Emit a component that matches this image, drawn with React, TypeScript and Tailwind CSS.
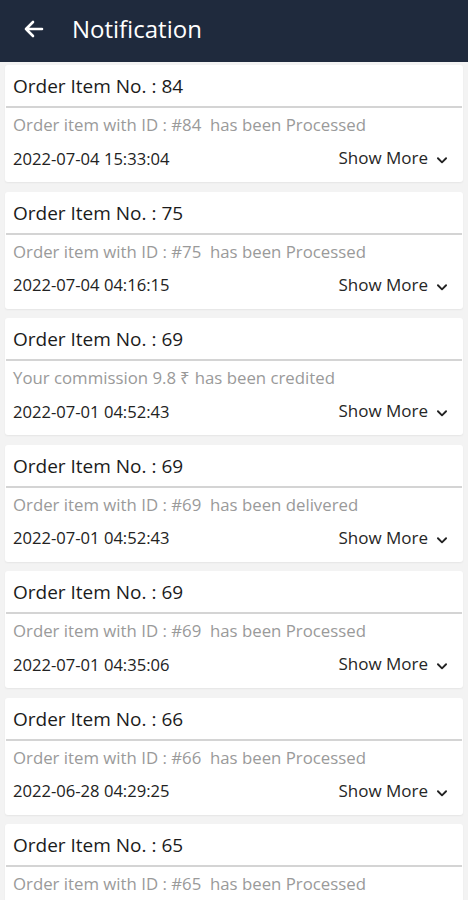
import { FC } from "react";

type Note = { no: string; msg: string; date: string };

const notes: Note[] = [
	{ no: "84", msg: "Order item with ID : #84  has been Processed", date: "2022-07-04 15:33:04" },
	{ no: "75", msg: "Order item with ID : #75  has been Processed", date: "2022-07-04 04:16:15" },
	{ no: "69", msg: "Your commission 9.8 ₹ has been credited", date: "2022-07-01 04:52:43" },
	{ no: "69", msg: "Order item with ID : #69  has been delivered", date: "2022-07-01 04:52:43" },
	{ no: "69", msg: "Order item with ID : #69  has been Processed", date: "2022-07-01 04:35:06" },
	{ no: "66", msg: "Order item with ID : #66  has been Processed", date: "2022-06-28 04:29:25" },
	{ no: "65", msg: "Order item with ID : #65  has been Processed", date: "2022-06-28 04:20:11" },
];

const NoteCard: FC<Note> = ({ no, msg, date }) => (
	<div className="bg-white rounded-[3px] shadow-[0_1px_2px_rgba(0,0,0,0.06)] pt-[8px] pb-[13px]">
		<h2 className="px-[8px] h-[26px] leading-[26px] text-[19px] text-[#1b1b1b]">
			Order Item No. : {no}
		</h2>
		<div className="mx-[1px] mt-[7px] h-[2px] bg-[#d4d4d4]" />
		<p className="px-[8px] mt-[6px] h-[22px] leading-[22px] text-[16.8px] text-[#9a9a9a] whitespace-pre">
			{msg}
		</p>
		<div className="px-[8px] mt-[11px] h-[22px] flex items-center justify-between">
			<span className="text-[16.6px] text-[#222] pt-[2px]">{date}</span>
			<span className="flex items-center gap-[7px] text-[17px] text-[#262626] pr-[6px]">
				Show More
				<svg width="14" height="14" viewBox="0 0 24 24" fill="none" stroke="#222" strokeWidth="3.2" strokeLinecap="round" strokeLinejoin="round" className="mt-[4px]">
					<path d="M5 9l7 7 7-7" />
				</svg>
			</span>
		</div>
	</div>
);

export default function App() {
	return (
		<div className="w-[468px] h-[900px] overflow-hidden bg-[#f3f3f3] font-['Open_Sans',sans-serif]">
			<header className="h-[62px] bg-[#1f2a3d] flex items-center px-[22px] pb-[5px] gap-[26px]">
				<svg width="24" height="24" viewBox="0 0 24 24" fill="none" stroke="white" strokeWidth="2.6" strokeLinecap="round" strokeLinejoin="round">
					<path d="M20 12H4M11 5l-7 7 7 7" />
				</svg>
				<h1 className="text-white text-[24px] leading-none">Notification</h1>
			</header>
			<div className="px-[5px] pt-[3px] flex flex-col gap-[9.5px]">
				{notes.map((n, i) => (
					<NoteCard key={i} {...n} />
				))}
			</div>
		</div>
	);
}
